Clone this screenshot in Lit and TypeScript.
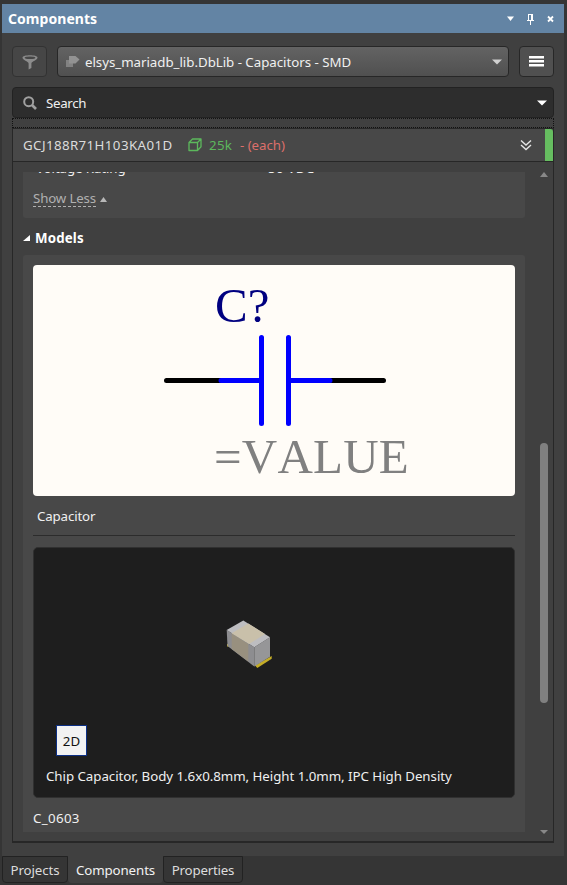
import { LitElement, html, css } from "lit";
import { customElement } from "lit/decorators.js";

@customElement("part-header")
class PartHeader extends LitElement {
  static styles = css`
    :host {
      display: flex;
      align-items: center;
      height: 33px;
      background: #484848;
      border-bottom: 1px solid #272727;
      color: #dcdcdc;
      white-space: nowrap;
      box-sizing: border-box;
    }
    .name { margin-left: 10px; width: 165px; letter-spacing: 0.4px; }
    .cube { width: 14px; height: 14px; flex: none; }
    .stock { margin-left: 7px; width: 31px; color: #5cb85c; letter-spacing: 0.3px; }
    .price { color: #dd6f6b; flex: 1; letter-spacing: -0.05px; }
    .chevrons { width: 12px; height: 12px; margin-right: 13px; }
    .status { width: 8px; height: 32px; background: #66bd60; border-radius: 0 3px 0 0; }
  `;
  render() {
    return html`
      <span class="name">GCJ188R71H103KA01D</span>
      <svg class="cube" viewBox="0 0 14 14" fill="none" stroke="#5cb85c" stroke-width="1.3" stroke-linejoin="round">
        <path d="M1 4.5H9.5V12.5H1ZM1 4.5L4.5 1H13V8.8L9.5 12.5M9.5 4.5L13 1" />
      </svg>
      <span class="stock">25k</span>
      <span class="price">- (each)</span>
      <svg class="chevrons" viewBox="0 0 12 12" fill="none" stroke="#e6e6e6" stroke-width="1.4">
        <path d="M1 1.5L6 6L11 1.5M1 6L6 10.5L11 6" />
      </svg>
      <span class="status"></span>
    `;
  }
}

@customElement("app-root")
class AppRoot extends LitElement {
  static styles = css`
    :host {
      display: flex;
      flex-direction: column;
      width: 567px;
      height: 885px;
      box-sizing: border-box;
      padding: 4px 3px 0 2px;
      overflow: hidden;
      background: #353535;
      color: #f0f0f0;
      font: 13.3px/18px "Noto Sans", "Open Sans", sans-serif;
      white-space: nowrap;
    }
    * { box-sizing: border-box; }
    svg { display: block; flex: none; }
    .panel { height: 852px; background: #404040; display: flex; flex-direction: column; }
    .title {
      height: 29px;
      flex: none;
      background: #6384a4;
      display: flex;
      align-items: center;
      padding: 0 9px 0 6px;
      font-weight: 700;
      font-size: 14px;
      color: #fff;
    }
    .title-text { flex: 1; letter-spacing: 0.05px; }
    .tools { display: flex; gap: 10px; padding: 13px 10px 0; height: 44px; }
    .btn, .combo {
      height: 31px;
      border: 1px solid #272727;
      border-radius: 4px;
      display: flex;
      align-items: center;
    }
    .btn { width: 35px; justify-content: center; background: #505050; }
    .btn.off { background: #464646; border-color: #323232; }
    .combo { width: 452px; background: linear-gradient(#636363, #505050); padding: 0 6px 0 7px; }
    .combo-text { flex: 1; margin-left: 5px; letter-spacing: -0.03px; }
    .search {
      margin: 10px 10px 0;
      height: 31px;
      flex: none;
      border: 1px solid #222;
      border-radius: 4px;
      background: #2d2d2d;
      display: flex;
      align-items: center;
      padding: 0 6px 0 10px;
    }
    .search-text { flex: 1; margin-left: 9px; letter-spacing: -0.3px; }
    .drop { height: 10px; flex: none; margin: 0 10px; border: 1px dotted #111; }
    .body {
      margin: 0 0 0 10px;
      width: 542px;
      height: 715px;
      flex: none;
      border: 1px solid #272727;
      border-bottom-width: 2px;
    }
    .scroller { display: flex; height: 660px; margin-top: 10px; padding-left: 10px; }
    .view { width: 502px; height: 660px; overflow: hidden; flex: none; }
    .params { height: 46px; background: #484848; border-radius: 0 0 3px 3px; overflow: hidden; padding: 0 10px; }
    .row { display: flex; height: 18px; margin-top: -13px; padding: 0 11px 0 3px; }
    .row-name { width: 232px; letter-spacing: -0.1px; }
    .row-value { flex: 1; letter-spacing: 0.3px; }
    .row-x { color: #999; font-size: 15px; line-height: 14px; }
    .less { display: flex; align-items: center; color: #b0b0b0; margin-top: 14px; gap: 4px; }
    .less-text { line-height: 15px; border-bottom: 1px dashed #b0b0b0; height: 16px; letter-spacing: -0.15px; }
    .section { display: flex; align-items: center; height: 37px; padding-top: 3px; font-weight: 700; color: #fff; gap: 5px; letter-spacing: 0.15px; }
    .models { background: #484848; height: 577px; border-radius: 3px 3px 0 0; padding: 10px 10px 0; }
    .symbol { width: 482px; height: 231px; background: #fffcf7; border-radius: 4px; }
    .symbol-text { font-family: "Liberation Serif", serif; font-size: 49px; font-kerning: none; }
    .symbol-text.value { letter-spacing: 0.2px; }
    .caption { height: 39px; padding: 11px 4px 0; letter-spacing: -0.15px; }
    .rule { height: 1px; background: #2c2c2c; margin-bottom: 11px; }
    .footprint {
      height: 251px;
      background: #1e1e1e;
      border: 1px solid #303030;
      border-radius: 5px;
      display: flex;
      flex-direction: column;
    }
    .chip { width: 48px; height: 50px; margin: 71px 0 0 191px; }
    .two-d {
      width: 31px;
      height: 31px;
      flex: none;
      margin: 56px 0 0 22px;
      border: 1px solid #0c2f84;
      background: #f2f2f2;
      color: #111;
      text-align: center;
      line-height: 30px;
    }
    .desc { margin: 11px 0 0 12px; letter-spacing: -0.04px; }
    .fp-name { margin-top: 11px; letter-spacing: 0.35px; }
    .bar { width: 28px; height: 660px; padding-left: 10px; display: flex; flex-direction: column; align-items: center; flex: none; }
    .thumb { width: 8px; height: 260px; flex: none; background: #808080; border-radius: 4px; margin: 266px 0 127px; }
    .tabs { display: flex; height: 27px; }
    .tab { height: 27px; border: 1px solid #222; border-radius: 0 0 4px 4px; line-height: 27px; text-align: center; color: #dcdcdc; letter-spacing: -0.1px; }
    .tab.on { background: #404040; border: 0; color: #f2f2f2; width: 95px; line-height: 29px; }
    .t1 { width: 66px; }
    .t3 { width: 80px; letter-spacing: -0.2px; }
  `;

  render() {
    return html`
      <div class="panel">
        <div class="title">
          <span class="title-text">Components</span>
          <svg width="50" height="12" viewBox="0 0 50 12" fill="#fff">
            <path d="M2 3.5H9L5.5 8Z" />
            <path d="M23 1H28V7H29V8H26V12H25V8H22V7H23ZM24 2V7H26V2Z" fill-rule="evenodd" />
            <path d="M43 3.5L48 8.5M48 3.5L43 8.5" stroke="#fff" stroke-width="1.8" />
          </svg>
        </div>
        <div class="tools">
          <div class="btn off">
            <svg width="16" height="16" viewBox="0 0 16 16">
              <path d="M0.500 3.600C0.500 0.600 15.500 0.600 15.500 3.600C15.500 6.400 9.700 7.200 9.400 9.500V14L6.600 15.500V9.500C6.300 7.200 0.500 6.400 0.500 3.600Z" fill="#8c8c8c" />
              <ellipse cx="8" cy="3.700" rx="5.400" ry="1.300" fill="#464646" />
            </svg>
          </div>
          <div class="combo">
            <svg width="15" height="14" viewBox="0 0 15 14">
              <path d="M1 5H8V12H1Z" fill="#828282" />
              <path d="M4 1H10.5L14.5 4.5L10.5 8.5H4Z" fill="#929292" />
            </svg>
            <span class="combo-text">elsys_mariadb_lib.DbLib - Capacitors - SMD</span>
            <svg width="10" height="6" viewBox="0 0 10 6"><path d="M0 0.5H10L5 5.5Z" fill="#d0d0d0" /></svg>
          </div>
          <div class="btn">
            <svg width="15" height="11" viewBox="0 0 15 11"><path d="M0 0H15V2.5H0ZM0 4H15V6.5H0ZM0 8H15V10.5H0Z" fill="#fff" /></svg>
          </div>
        </div>
        <div class="search">
          <svg width="14" height="14" viewBox="0 0 14 14" fill="none" stroke="#a0a0a0">
            <circle cx="5.7" cy="5.7" r="4.5" stroke-width="2" />
            <path d="M9 9L13 13" stroke-width="2.6" />
          </svg>
          <span class="search-text">Search</span>
          <svg width="10" height="6" viewBox="0 0 10 6"><path d="M0 0.5H10L5 5.5Z" fill="#fff" /></svg>
        </div>
        <div class="drop"></div>
        <div class="body">
          <part-header></part-header>
          <div class="scroller">
            <div class="view">
              <div class="params">
                <div class="row">
                  <span class="row-name">Voltage Rating</span>
                  <span class="row-value">50 VDC</span>
                  <span class="row-x">×</span>
                </div>
                <div class="less">
                  <span class="less-text">Show Less</span>
                  <svg width="7" height="5" viewBox="0 0 7 5"><path d="M0 5L3.5 0L7 5Z" fill="#b8b8b8" /></svg>
                </div>
              </div>
              <div class="section">
                <svg width="7" height="6" viewBox="0 0 7 6"><path d="M7 0V6H0Z" fill="#fff" /></svg>
                <span>Models</span>
              </div>
              <div class="models">
                <div class="symbol">
                  <svg width="482" height="231" viewBox="0 0 482 231" fill="none" stroke-width="5" stroke-linecap="round">
                    <path d="M133.500 115.500H188M297 115.500H350.500" stroke="#000" />
                    <path d="M188 115.500H228.500M255.500 115.500H297M228.500 72.500V158.500M255.500 72.500V158.500" stroke="#00f" />
                    <text class="symbol-text" x="182" y="57" fill="#000080">C?</text>
                    <text class="symbol-text value" x="181" y="208" fill="#808080">=VALUE</text>
                  </svg>
                </div>
                <div class="caption">Capacitor</div>
                <div class="rule"></div>
                <div class="footprint">
                  <svg class="chip" viewBox="0 0 48 50">
                    <path d="M30 46.500L46.700 37V39.700L32.300 49ZM2 25H4V27.500H2ZM8 30H11V32.500Z" fill="#c4ad27" />
                    <path d="M1.700 11L29.300 28.300V47.500L2.500 27Z" fill="#8d8d90" />
                    <path d="M6.700 14.300L23.300 25V42.500L6.700 30Z" fill="#98907f" />
                    <path d="M29.300 28.300L45 18.300V37.700L29.300 47.500Z" fill="#969698" />
                    <path d="M1.700 11L18.300 1.400L45 18.300L29.300 28.300Z" fill="#bdbdc0" />
                    <path d="M6.700 14.300L23.300 4.500L40 15L24 25Z" fill="#c9c0aa" />
                  </svg>
                  <div class="two-d">2D</div>
                  <div class="desc">Chip Capacitor, Body 1.6x0.8mm, Height 1.0mm, IPC High Density</div>
                </div>
                <div class="fp-name">C_0603</div>
              </div>
            </div>
            <div class="bar">
              <svg width="8" height="5" viewBox="0 0 8 5"><path d="M0 5L4 0L8 5Z" fill="#888" /></svg>
              <div class="thumb"></div>
              <svg width="8" height="5" viewBox="0 0 8 5"><path d="M0 0H8L4 4Z" fill="#888" /></svg>
            </div>
          </div>
        </div>
      </div>
      <div class="tabs">
        <div class="tab t1">Projects</div>
        <div class="tab on">Components</div>
        <div class="tab t3">Properties</div>
      </div>
    `;
  }
}
